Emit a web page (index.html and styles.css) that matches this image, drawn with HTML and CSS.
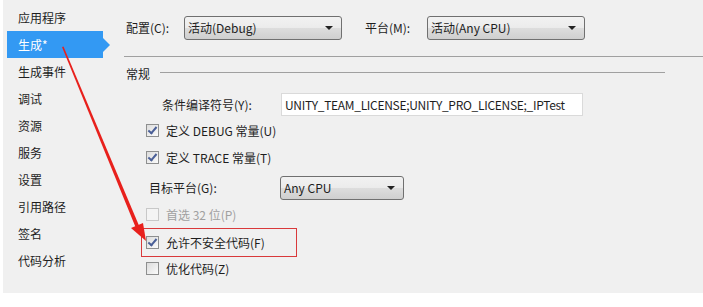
FILE: index.html
```html
<!DOCTYPE html>
<html lang="zh-CN">
<head>
  <meta charset="UTF-8">
  <title>生成 | 项目属性</title>
  <link rel="stylesheet" href="styles.css">
</head>
<body>

  <div class="window">
    <ul class="side-nav">
      <li>应用程序</li>
      <li class="active">生成*</li>
      <li>生成事件</li>
      <li>调试</li>
      <li>资源</li>
      <li>服务</li>
      <li>设置</li>
      <li>引用路径</li>
      <li>签名</li>
      <li>代码分析</li>
    </ul>

    <div class="page">
      <div class="config-bar">
        <span class="lbl">配置(C):</span>
        <div class="combo combo-config">活动(Debug)<span class="caret"></span></div>
        <span class="lbl lbl-platform">平台(M):</span>
        <div class="combo combo-platform">活动(Any CPU)<span class="caret"></span></div>
      </div>

      <div class="group-title">
        <span>常规</span>
        <div class="rule"></div>
      </div>

      <div class="row row-symbols">
        <span class="lbl">条件编译符号(Y):</span>
        <div class="textbox">UNITY_TEAM_LICENSE;UNITY_PRO_LICENSE;_IPTest</div>
      </div>

      <div class="check-row"><span class="box checked"></span>定义 DEBUG 常量(U)</div>
      <div class="check-row"><span class="box checked"></span>定义 TRACE 常量(T)</div>

      <div class="row row-target">
        <span class="lbl">目标平台(G):</span>
        <div class="combo combo-target">Any CPU<span class="caret"></span></div>
      </div>

      <div class="check-row disabled"><span class="box"></span>首选 32 位(P)</div>
      <div class="check-row marked"><span class="box checked"></span>允许不安全代码(F)</div>
      <div class="check-row"><span class="box"></span>优化代码(Z)</div>
    </div>

    <!-- annotation arrow drawn over the page -->
    <svg class="annotation" width="703" height="307" viewBox="0 0 703 307">
      <polygon points="62,47 63.5,46.5 140,228 136.5,229.5" fill="#e8201c"/>
      <polygon points="146,241 131,228 143,223" fill="#e8201c"/>
    </svg>
  </div>

</body>
</html>
```

FILE: styles.css
```css
* { margin: 0; padding: 0; box-sizing: border-box; }
body {
  background: #fff;
  font-family: "Noto Sans CJK SC", "Open Sans", sans-serif;
  font-size: 12px;
  color: #1e1e1e;
}
.window {
  position: relative;
  margin-left: 3px;
  width: 700px;
  height: 293px;
  background: #f0f0f0;
  display: flex;
}
.side-nav {
  list-style: none;
  width: 107px;
  padding: 4px 0 0 4px;
}
.side-nav li {
  height: 27px;
  line-height: 27px;
  padding-left: 11px;
  width: 96px;
  position: relative;
}
.side-nav li.active {
  background: #3399f3;
  color: #fff;
}
.side-nav li.active::after {
  content: "";
  position: absolute;
  right: -7px;
  top: 7px;
  border-left: 7px solid #3399f3;
  border-top: 7px solid transparent;
  border-bottom: 7px solid transparent;
}
.page {
  flex: 1;
  padding-left: 14px;
}
.config-bar {
  display: flex;
  align-items: center;
  height: 57px;
  padding: 0 0 1px 2px;
  border-bottom: 1px solid #a0a0a0;
  margin-right: -3px;
}
.config-bar .lbl { width: 58px; }
.config-bar .lbl-platform { width: 62px; margin-left: 23px; }
.combo {
  position: relative;
  height: 24px;
  line-height: 22px;
  padding-left: 3px;
  border: 1px solid #707070;
  border-radius: 3px;
  background: linear-gradient(#f2f2f2, #ebebeb 50%, #dddddd 51%, #cfcfcf);
}
.caret {
  position: absolute;
  right: 8px;
  top: 9px;
  border-top: 4px solid #222;
  border-left: 4px solid transparent;
  border-right: 4px solid transparent;
}
.combo-config { width: 158px; }
.combo-platform { width: 158px; }
.combo-target { width: 124px; }
.group-title {
  display: flex;
  align-items: center;
  height: 32px;
  padding-left: 2px;
  margin-right: 38px;
}
.group-title .rule {
  flex: 1;
  height: 1px;
  background: #a0a0a0;
  margin-left: 10px;
  margin-top: -1px;
}
.row {
  display: flex;
  align-items: center;
}
.row-symbols { height: 26px; padding-left: 38px; margin-top: 2px; }
.row-symbols .lbl { width: 119px; }
.textbox {
  width: 302px;
  height: 23px;
  line-height: 21px;
  padding-left: 3px;
  background: #fff;
  border: 1px solid #dadada;
  white-space: nowrap;
  overflow: hidden;
  letter-spacing: -0.3px;
}
.check-row {
  display: flex;
  align-items: center;
  height: 27px;
  padding-left: 22px;
}
.box {
  position: relative;
  width: 13px;
  height: 13px;
  margin-right: 7px;
  border: 1px solid #8e8f8f;
  background: linear-gradient(135deg, #dcdcdc, #fbfbfb);
}
.box.checked::after {
  content: "";
  position: absolute;
  left: 3px;
  top: 0;
  width: 3px;
  height: 7px;
  border-right: 2px solid #4a5f97;
  border-bottom: 2px solid #4a5f97;
  transform: rotate(40deg);
}
.row-target { height: 30px; padding: 3px 0 0 25px; }
.row-target .lbl { width: 131px; }
.check-row.disabled { color: #a0a0a0; }
.check-row.disabled .box { border-color: #c8c8c8; background: #f4f4f4; }
.check-row.marked {
  width: 156px;
  margin: 0 0 -2px 17px;
  padding-left: 4px;
  height: 29px;
  border: 1px solid #d9393b;
}
.annotation {
  position: absolute;
  left: -3px;
  top: 0;
  pointer-events: none;
}
```
